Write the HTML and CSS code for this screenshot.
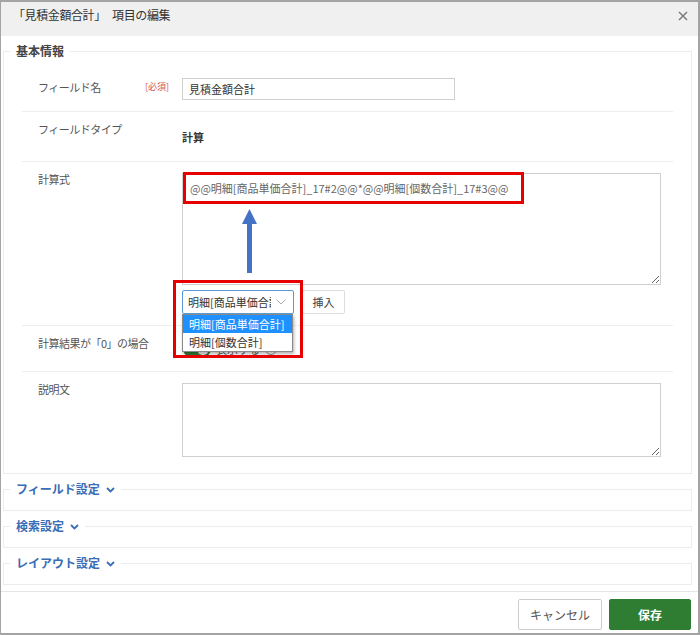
FILE: index.html
```html
<!DOCTYPE html>
<html lang="ja">
<head>
  <meta charset="UTF-8" />
  <meta name="viewport" content="width=device-width, initial-scale=1" />
  <title>項目の編集</title>
  <link rel="stylesheet" href="styles.css">
</head>
<body>
  <div class="dialog">
    <div class="dialog-header">
      <span class="dialog-title">「見積金額合計」 項目の編集</span>
      <span class="close-btn">
        <svg width="10" height="10" viewBox="0 0 10 10"><path d="M1 1L9 9M9 1L1 9" stroke="#777" stroke-width="1.4" fill="none"/></svg>
      </span>
    </div>

    <div class="dialog-body">
      <fieldset class="section">
        <legend class="section-title">基本情報</legend>

        <div class="form-row form-row--input">
          <div class="form-label">
            <span class="label-text">フィールド名</span>
            <span class="required">[必須]</span>
          </div>
          <div class="form-value">
            <input class="text-input" type="text" value="見積金額合計">
          </div>
        </div>

        <div class="form-row">
          <div class="form-label"><span class="label-text">フィールドタイプ</span></div>
          <div class="form-value">
            <div class="value-text">計算</div>
          </div>
        </div>

        <div class="form-row">
          <div class="form-label"><span class="label-text">計算式</span></div>
          <div class="form-value formula">
            <textarea class="text-area formula-area">@@明細[商品単価合計]_17#2@@*@@明細[個数合計]_17#3@@</textarea>
            <div class="mark mark-formula"></div>
            <svg class="mark-arrow" width="15" height="64" viewBox="0 0 15 64">
              <path d="M7.5 0L15 15H10V64H5V15H0Z" fill="#4472c4"/>
            </svg>

            <div class="insert-row">
              <div class="select-wrap">
                <div class="select-box">
                  <span class="select-text">明細[商品単価合計]</span>
                  <svg class="select-caret" width="10" height="6" viewBox="0 0 10 6"><path d="M0.5 0.5L5 5L9.5 0.5" stroke="#aaa" stroke-width="1" fill="none"/></svg>
                </div>
                <ul class="select-list">
                  <li class="select-option is-active">明細[商品単価合計]</li>
                  <li class="select-option">明細[個数合計]</li>
                </ul>
                <div class="mark mark-select"></div>
              </div>
              <button class="btn btn-insert">挿入</button>
            </div>
          </div>
        </div>

        <div class="form-row">
          <div class="form-label"><span class="label-text">計算結果が「0」の場合</span></div>
          <div class="form-value">
            <div class="toggle">
              <span class="toggle-track"><span class="toggle-knob"></span></span>
              <span class="toggle-label">表示する</span>
              <span class="help-icon">?</span>
            </div>
          </div>
        </div>

        <div class="form-row">
          <div class="form-label"><span class="label-text">説明文</span></div>
          <div class="form-value">
            <textarea class="text-area desc-area"></textarea>
          </div>
        </div>
      </fieldset>

      <fieldset class="section section--collapsed">
        <legend class="section-title section-title--link">フィールド設定
          <svg width="9" height="6" viewBox="0 0 9 6"><path d="M1 1L4.5 4.5L8 1" stroke="#3a6db5" stroke-width="1.8" fill="none"/></svg>
        </legend>
      </fieldset>

      <fieldset class="section section--collapsed">
        <legend class="section-title section-title--link">検索設定
          <svg width="9" height="6" viewBox="0 0 9 6"><path d="M1 1L4.5 4.5L8 1" stroke="#3a6db5" stroke-width="1.8" fill="none"/></svg>
        </legend>
      </fieldset>

      <fieldset class="section section--collapsed">
        <legend class="section-title section-title--link">レイアウト設定
          <svg width="9" height="6" viewBox="0 0 9 6"><path d="M1 1L4.5 4.5L8 1" stroke="#3a6db5" stroke-width="1.8" fill="none"/></svg>
        </legend>
      </fieldset>
    </div>

    <div class="dialog-footer">
      <button class="btn btn-cancel">キャンセル</button>
      <button class="btn btn-save">保存</button>
    </div>
  </div>
</body>
</html>
```

FILE: styles.css
```css
html, body {
  margin: 0;
  padding: 0;
  background: #fff;
  font-family: "Noto Sans CJK JP", "Noto Sans", sans-serif;
  color: #333;
}

.dialog {
  width: 700px;
  height: 635px;
  box-sizing: border-box;
  border-style: solid;
  border-color: #a4a4a4;
  border-width: 2px 2px 2px 1px;
  display: flex;
  flex-direction: column;
  background: #fff;
}

.dialog-header {
  height: 34px;
  box-sizing: border-box;
  background: #f0f0f0;
  display: flex;
  justify-content: space-between;
  align-items: flex-start;
  padding: 4px 10px 0 12px;
}

.dialog-title {
  font-size: 12px;
  line-height: 18px;
  letter-spacing: -0.4px;
  word-spacing: 4px;
  color: #333;
}

.close-btn {
  display: flex;
  margin-top: 5px;
}

.dialog-body {
  flex: 1;
  padding: 7px 6px 0 2px;
}

.section {
  margin: 0;
  padding: 8px 6px 5px;
  border: 1px solid #ececec;
  min-width: 0;
}

.section--collapsed {
  margin-top: 7px;
  padding: 0 6px 13px;
}

.section-title {
  padding: 0 6px;
  font-size: 12px;
  line-height: 16px;
  font-weight: 700;
  color: #444;
}

.section-title--link {
  color: #3a6db5;
}

.section-title--link svg {
  margin-left: 3px;
  vertical-align: 1px;
}

.form-row {
  display: flex;
  margin: 0 12px;
  padding: 11px 0;
}

.form-row + .form-row {
  border-top: 1px solid #eeeeee;
}

.form-label {
  flex: 0 0 160px;
  box-sizing: border-box;
  padding-left: 16px;
  margin-top: -2px;
  display: flex;
  align-items: flex-start;
  font-size: 11px;
  line-height: 16px;
  letter-spacing: -0.5px;
  color: #555;
}

.form-row--input .form-label {
  line-height: 22px;
}

.label-text {
  flex: 0 0 107px;
  white-space: nowrap;
}

.required {
  font-size: 9px;
  letter-spacing: 0;
  color: #d9534f;
}

.form-value {
  flex: 1;
  font-size: 11px;
}

.value-text {
  padding: 6px 0 5px;
  line-height: 16px;
  font-weight: 700;
  color: #333;
}

.text-input {
  width: 273px;
  height: 22px;
  box-sizing: border-box;
  border: 1px solid #cfcfcf;
  padding: 0 6px;
  font-family: inherit;
  font-size: 11px;
  color: #333;
  outline: none;
}

.text-area {
  display: block;
  width: 479px;
  box-sizing: border-box;
  border: 1px solid #cfcfcf;
  padding: 6px 7px;
  margin: 0;
  font-family: inherit;
  font-size: 11px;
  line-height: 16px;
  color: #666;
  outline: none;
}

.formula {
  position: relative;
}

.formula-area {
  height: 112px;
}

.desc-area {
  height: 74px;
}

.insert-row {
  display: flex;
  gap: 8px;
  margin-top: 5px;
}

.select-wrap {
  position: relative;
}

.select-box {
  width: 112px;
  height: 24px;
  box-sizing: border-box;
  border: 1px solid #5b9bd5;
  border-radius: 2px;
  display: flex;
  align-items: center;
  padding: 0 6px 0 5px;
  background: #fff;
}

.select-text {
  width: 83px;
  overflow: hidden;
  white-space: nowrap;
  color: #333;
}

.select-caret {
  margin-left: 5px;
}

.select-list {
  position: absolute;
  top: 24px;
  left: 0;
  z-index: 2;
  width: 111px;
  box-sizing: border-box;
  margin: 0;
  padding: 0;
  list-style: none;
  background: #fff;
  border: 1px solid #8a8a8a;
  box-shadow: 1px 2px 3px rgba(0, 0, 0, 0.3);
}

.select-option {
  height: 18px;
  line-height: 18px;
  padding: 0 6px;
  font-size: 11px;
  color: #333;
  white-space: nowrap;
}

.select-option.is-active {
  background: #1e90ff;
  color: #fff;
}

.btn {
  font-family: inherit;
  border-radius: 2px;
  cursor: pointer;
}

.btn-insert {
  width: 43px;
  height: 24px;
  border: 1px solid #ddd;
  background: #fff;
  font-size: 11px;
  color: #444;
  padding: 0;
}

.toggle {
  height: 23px;
  display: flex;
  align-items: center;
  gap: 5px;
  color: #555;
}

.toggle-track {
  position: relative;
  width: 28px;
  height: 16px;
  border-radius: 8px;
  background: #2e7d32;
  margin-left: 1px;
}

.toggle-knob {
  position: absolute;
  top: 2px;
  right: 2px;
  width: 12px;
  height: 12px;
  border-radius: 50%;
  background: #f2f2f2;
}

.help-icon {
  width: 10px;
  height: 10px;
  border: 1px solid #888;
  border-radius: 50%;
  font-size: 8px;
  line-height: 10px;
  text-align: center;
  color: #888;
}

/* annotations drawn over the form */
.mark {
  position: absolute;
  border: 3px solid #e60000;
  box-sizing: border-box;
  z-index: 3;
  pointer-events: none;
}

.mark-formula {
  left: 1px;
  top: -1px;
  width: 341px;
  height: 32px;
}

.mark-select {
  left: -9px;
  top: -10px;
  width: 130px;
  height: 78px;
}

.mark-arrow {
  position: absolute;
  left: 60px;
  top: 36px;
}

.dialog-footer {
  border-top: 1px solid #e5e5e5;
  display: flex;
  justify-content: flex-end;
  gap: 7px;
  padding: 7px 7px 0;
  height: 42px;
  box-sizing: border-box;
}

.btn-cancel {
  width: 84px;
  height: 31px;
  border: 1px solid #ccc;
  background: #fff;
  font-size: 12px;
  color: #555;
}

.btn-save {
  width: 82px;
  height: 31px;
  border: 1px solid #2e7d32;
  background: #2e7d32;
  font-size: 12px;
  font-weight: 700;
  color: #fff;
}
```
